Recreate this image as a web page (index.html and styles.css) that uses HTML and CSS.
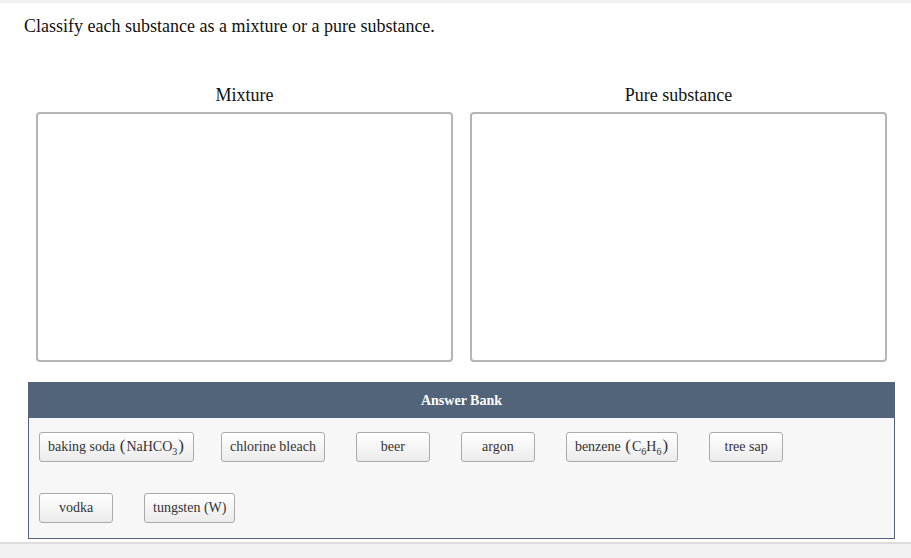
FILE: index.html
```html
<!DOCTYPE html>
<html lang="en">
<head>
    <meta charset="UTF-8">
    <meta name="viewport" content="width=device-width, initial-scale=1.0">
    <title>Classify substances</title>
    <link rel="stylesheet" href="styles.css">
</head>
<body>
    <div class="topbar"></div>
    <div class="question">
        <p class="prompt">Classify each substance as a mixture or a pure substance.</p>
        <div class="bins">
            <div class="bin">
                <div class="bin-title">Mixture</div>
                <div class="bin-box"></div>
            </div>
            <div class="bin">
                <div class="bin-title">Pure substance</div>
                <div class="bin-box"></div>
            </div>
        </div>
        <div class="bank">
            <div class="bank-head">Answer Bank</div>
            <div class="bank-body">
                <div class="chip chip-first"><span>baking soda <span class="paren">(</span>NaHCO<sub>3</sub><span class="paren">)</span></span></div>
                <div class="chip"><span>chlorine bleach</span></div>
                <div class="chip"><span>beer</span></div>
                <div class="chip"><span>argon</span></div>
                <div class="chip"><span>benzene <span class="paren">(</span>C<sub>6</sub>H<sub>6</sub><span class="paren">)</span></span></div>
                <div class="chip"><span>tree sap</span></div>
                <div class="chip"><span>vodka</span></div>
                <div class="chip"><span>tungsten (W)</span></div>
            </div>
        </div>
    </div>
    <div class="footer"></div>
</body>
</html>
```

FILE: styles.css
```css
*{
    margin: 0;
    padding: 0;
    box-sizing: border-box;
}
body{
    width: 100%;
    min-height: 100vh;
    background-color: #fff;
    font-family: "Liberation Serif", "Times New Roman", serif;
    color: #222;
    display: flex;
    flex-direction: column;
}
.topbar{
    height: 3px;
    background-color: #f1f1f1;
}
.question{
    padding: 13px 16px 3px 28px;
}
.prompt{
    font-size: 18px;
    color: #111;
    margin-left: -4px;
    line-height: 20px;
}
.bins{
    display: flex;
    gap: 17px;
    padding: 0 8px;
    margin-top: 49px;
}
.bin{
    width: 417px;
}
.bin-title{
    text-align: center;
    font-size: 18px;
    color: #111;
    line-height: 20px;
    margin-bottom: 7px;
}
.bin-box{
    height: 250px;
    border: 2px solid #b5b5b5;
    border-radius: 4px;
    background-color: #fff;
}
.bank{
    margin-top: 20px;
    width: 867px;
    border: 1px solid #51647a;
    background-color: #f7f7f7;
}
.bank-head{
    height: 35px;
    background-color: #51647a;
    color: #fff;
    font-weight: bold;
    font-size: 14px;
    text-align: center;
    line-height: 35px;
}
.bank-body{
    display: flex;
    flex-wrap: wrap;
    column-gap: 31px;
    row-gap: 31px;
    padding: 14px 10px 15px 10px;
    max-width: 790px;
}
.chip{
    min-width: 74px;
    height: 30px;
    padding: 0 8px;
    border: 1px solid #aaa;
    border-radius: 3px;
    background: linear-gradient(#ffffff, #ebebeb);
    font-size: 14px;
    line-height: 16px;
    color: #333;
    display: flex;
    align-items: center;
    justify-content: center;
    white-space: nowrap;
}
.chip-first{
    margin-right: -4px;
}
.chip sub{
    font-size: 10px;
    vertical-align: -4px;
    line-height: 0;
}
.paren{
    font-size: 17px;
    line-height: 0;
    margin: 0 1px;
}
.footer{
    flex: 1;
    border-top: 2px solid #dcdcdc;
    background-color: #f2f2f2;
}
```
